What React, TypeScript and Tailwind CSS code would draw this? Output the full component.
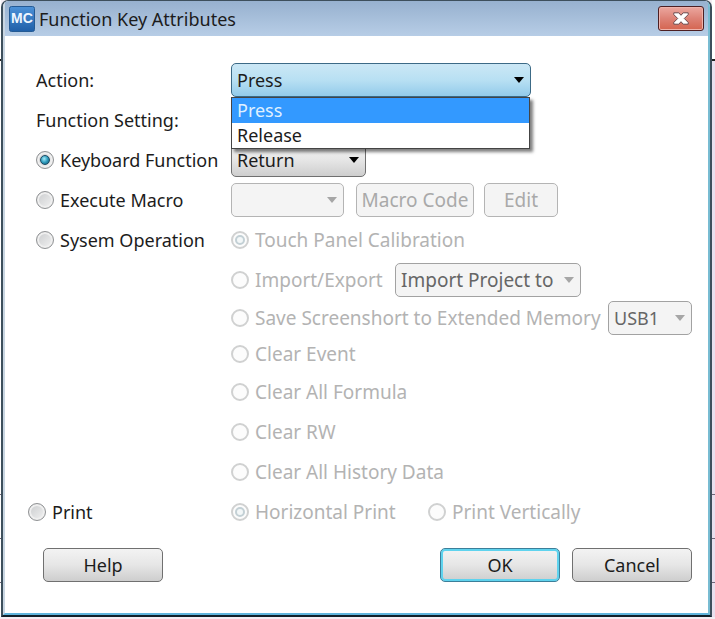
import { useState } from 'react';
import type { ReactNode } from 'react';

interface RadioProps {
  name: string;
  label: string;
  checked?: boolean;
  disabled?: boolean;
  onChange?: () => void;
}

const actions = ['Press', 'Release'];

const buttonBase = 'h-[34px] rounded-[5px] border text-center whitespace-nowrap';
const buttonEnabled = 'bg-linear-to-b from-[#f3f3f3] via-[#e6e6e6] to-[#cecece] border-[#707070]';
const buttonDisabled = 'bg-[#f4f4f4] border-[#b4b4b4] text-[19px] text-[#a9a9a9]';

function Radio({ name, label, checked, disabled, onChange }: RadioProps) {
  let tone =
    'border border-[#8f9193] bg-linear-to-br from-[#c9cbcd] to-[#f3f3f3] inset-shadow-[0_0_0_2px_#efefef]';
  let dot = 'border border-[#1c4a63] bg-radial-[at_40%_35%] from-[#a5ecfa] via-[#2f9cbd] to-[#0f5270]';
  if (disabled) {
    tone = 'border-2 border-[#d0d1d1] bg-[#fcfcfc]';
    dot = 'border-2 border-[#c3d0d5] bg-[#f3f7f8]';
  }
  return (
    <label
      className={`flex items-center gap-1.5 whitespace-nowrap ${disabled ? 'text-[19px] text-[#b3b3b3]' : ''}`}
    >
      <span className="grid place-items-center">
        <input
          type="radio"
          name={name}
          checked={!!checked}
          disabled={disabled}
          onChange={onChange ?? (() => {})}
          className={`col-start-1 row-start-1 size-[18px] appearance-none rounded-full ${tone}`}
        />
        {checked && (
          <span className={`pointer-events-none col-start-1 row-start-1 size-2.5 rounded-full ${dot}`} />
        )}
      </span>
      {label}
    </label>
  );
}

interface ComboProps {
  label: string;
  options: string[];
  width: string;
  tone: string;
  arrow?: string;
  disabled?: boolean;
  value?: string;
  onChange?: (value: string) => void;
}

function Combo({ label, options, width, tone, arrow = 'text-black', disabled, value, onChange }: ComboProps) {
  return (
    <div className={`grid shrink-0 items-center ${width}`}>
      <select
        aria-label={label}
        disabled={disabled}
        value={value ?? options[0]}
        onChange={(e) => onChange?.(e.target.value)}
        className={`col-start-1 row-start-1 h-[34px] w-full appearance-none rounded-[5px] border pl-[5px] opacity-100 ${tone}`}
      >
        {options.map((o) => (
          <option key={o}>{o}</option>
        ))}
      </select>
      <svg
        viewBox="0 0 10 6"
        className={`pointer-events-none col-start-1 row-start-1 mr-[7px] h-1.5 w-2.5 justify-self-end ${arrow}`}
      >
        <path d="M0 0h10L5 6z" fill="currentColor" />
      </svg>
    </div>
  );
}

function Row({ left, children, height = 'h-10' }: { left?: ReactNode; children?: ReactNode; height?: string }) {
  return (
    <div className={`flex items-center pl-2 ${height}`}>
      <div className="w-[195px] shrink-0">{left}</div>
      {children}
    </div>
  );
}

// slice of the window lying behind the dialog
function Backdrop({ width, tint }: { width: string; tint: string }) {
  return (
    <div className={`flex shrink-0 flex-col ${width}`}>
      <div className="h-[61px] border-b-2 border-[#222] bg-white" />
      <div className={`h-[434px] border-b border-[#6f6577] ${tint}`} />
      <div className={`h-11 border-b border-[#6f6577] ${tint}`} />
      <div className={`h-11 border-b border-[#6f6577] ${tint}`} />
      <div className={`flex-1 ${tint}`} />
    </div>
  );
}

export default function App() {
  const [action, setAction] = useState('Press');
  const [mode, setMode] = useState('keyboard');

  return (
    <div className="bg-[#f3edf3] pb-0.5 font-['Noto_Sans','Open_Sans',sans-serif] text-[18px] leading-6 text-[#1c1c1c]">
      <div className="flex">
        <Backdrop width="w-px" tint="bg-white" />
        <div
          role="dialog"
          aria-labelledby="title"
          className="min-w-0 flex-1 overflow-hidden rounded-t-[7px] border-2 border-t border-[#3d4f5c] border-b-[#10202a] bg-white"
        >
          <div className="border-x-2 border-b-2 border-l-[#c9d6e2] border-r-[#78bcd2] border-b-[#5fb4dc]">
            <header className="flex h-[35px] items-center bg-linear-to-b from-[#97b1cf] to-[#b7cde6] pr-1 pl-1">
              <svg viewBox="0 0 26 26" className="size-[26px] shrink-0">
                <defs>
                  <linearGradient id="logo" x1="0" y1="0" x2="0" y2="1">
                    <stop offset="0" stopColor="#4c92d8" />
                    <stop offset="1" stopColor="#1f5fa8" />
                  </linearGradient>
                </defs>
                <rect x="0.5" y="0.5" width="25" height="25" rx="2" fill="url(#logo)" stroke="#245a94" />
                <text
                  x="13"
                  y="17"
                  textAnchor="middle"
                  fontSize="14"
                  fontWeight="700"
                  fontFamily="Liberation Sans, sans-serif"
                  fill="#eef6ff"
                >
                  MC
                </text>
              </svg>
              <h1 id="title" className="flex-1 pl-1">
                Function Key Attributes
              </h1>
              <button
                aria-label="Close"
                className="grid h-[25px] w-[46px] place-items-center rounded-[3px] border border-[#4d1f22] bg-linear-to-b from-[#eba79f] from-0% via-[#dd8276] via-50% to-[#d4644f] inset-shadow-[0_0_0_1px_#eeb3ab]"
              >
                <svg viewBox="0 0 16 13" className="h-[13px] w-4">
                  <path
                    d="M.8.8h5L8 3.300 10.200.8h5v1.800L11.300 6.500l3.900 3.900v1.800h-5L8 9.700l-2.200 2.500h-5v-1.800L4.700 6.500.8 2.600z"
                    fill="#fff"
                    stroke="#6b4a4e"
                    strokeWidth="1"
                    strokeLinejoin="round"
                  />
                </svg>
              </button>
            </header>

            <form className="pt-6 pr-4 pb-[31px] pl-[23px]" onSubmit={(e) => e.preventDefault()}>
              <Row left="Action:">
                <div className="relative">
                  <Combo
                    label="Action"
                    options={actions}
                    value={action}
                    onChange={setAction}
                    width="w-[300px]"
                    tone="border-[#3c6a86] bg-linear-to-b from-[#cbe7f5] via-[#b8e0f3] to-[#93cbea]"
                  />
                  <ul
                    role="listbox"
                    aria-label="Action options"
                    className="absolute top-full left-0 z-10 w-[299px] border border-[#444] bg-white shadow-[3px_3px_3px_rgba(0,0,0,0.5)]"
                  >
                    {actions.map((a) => (
                      <li
                        key={a}
                        role="option"
                        aria-selected={a === action}
                        onClick={() => setAction(a)}
                        className={`h-[25px] pl-[5px] leading-[25px] ${a === action ? 'bg-[#3399ff] text-[#dff0ff]' : ''}`}
                      >
                        {a}
                      </li>
                    ))}
                  </ul>
                </div>
              </Row>
              <Row left="Function Setting:" />
              <Row
                left={
                  <Radio
                    name="mode"
                    label="Keyboard Function"
                    checked={mode === 'keyboard'}
                    onChange={() => setMode('keyboard')}
                  />
                }
              >
                <Combo label="Key" options={['Return']} width="w-[135px]" tone={buttonEnabled} />
              </Row>
              <Row
                left={
                  <Radio
                    name="mode"
                    label="Execute Macro"
                    checked={mode === 'macro'}
                    onChange={() => setMode('macro')}
                  />
                }
              >
                <Combo
                  label="Macro"
                  options={['']}
                  width="w-[113px]"
                  tone={buttonDisabled}
                  arrow="text-[#a6a6a6]"
                  disabled
                />
                <button type="button" disabled className={`ml-3 w-[118px] ${buttonBase} ${buttonDisabled}`}>
                  Macro Code
                </button>
                <button type="button" disabled className={`ml-2.5 w-[74px] ${buttonBase} ${buttonDisabled}`}>
                  Edit
                </button>
              </Row>
              <Row
                left={
                  <Radio
                    name="mode"
                    label="Sysem Operation"
                    checked={mode === 'system'}
                    onChange={() => setMode('system')}
                  />
                }
              >
                <Radio name="system" label="Touch Panel Calibration" checked disabled />
              </Row>
              <Row>
                <div className="w-[164px] shrink-0">
                  <Radio name="system" label="Import/Export" disabled />
                </div>
                <Combo
                  label="Import or export target"
                  options={['Import Project to']}
                  width="w-[186px]"
                  tone="border-[#a2a2a2] bg-[#f4f4f4] text-[19px] text-[#666]"
                  arrow="text-[#a6a6a6]"
                  disabled
                />
              </Row>
              <Row height="h-9">
                <div className="w-[377px] shrink-0">
                  <Radio name="system" label="Save Screenshort to Extended Memory" disabled />
                </div>
                <Combo
                  label="Memory"
                  options={['USB1']}
                  width="w-[84px]"
                  tone="border-[#a2a2a2] bg-[#f4f4f4] text-[#666]"
                  arrow="text-[#a6a6a6]"
                  disabled
                />
              </Row>
              <Row height="h-9">
                <Radio name="system" label="Clear Event" disabled />
              </Row>
              <Row>
                <Radio name="system" label="Clear All Formula" disabled />
              </Row>
              <Row>
                <Radio name="system" label="Clear RW" disabled />
              </Row>
              <Row>
                <Radio name="system" label="Clear All History Data" disabled />
              </Row>
              <div className="flex h-10 items-center">
                <div className="w-[203px] shrink-0">
                  <Radio
                    name="mode"
                    label="Print"
                    checked={mode === 'print'}
                    onChange={() => setMode('print')}
                  />
                </div>
                <div className="w-[197px] shrink-0">
                  <Radio name="print" label="Horizontal Print" checked disabled />
                </div>
                <Radio name="print" label="Print Vertically" disabled />
              </div>

              <div className="flex gap-3 pt-4 pl-[15px]">
                <button type="button" className={`w-[120px] ${buttonBase} ${buttonEnabled}`}>
                  Help
                </button>
                <button
                  type="submit"
                  className="ml-auto h-[34px] w-[120px] rounded-[5px] border border-[#3c7f9a] bg-linear-to-b from-[#f3f3f3] via-[#e6e6e6] to-[#cecece] inset-shadow-[0_0_0_2px_#5fd3ee]"
                >
                  OK
                </button>
                <button type="button" className={`w-[120px] ${buttonBase} ${buttonEnabled}`}>
                  Cancel
                </button>
              </div>
            </form>
          </div>
        </div>
        <Backdrop width="w-[3px]" tint="bg-[#e9dfee]" />
      </div>
    </div>
  );
}
